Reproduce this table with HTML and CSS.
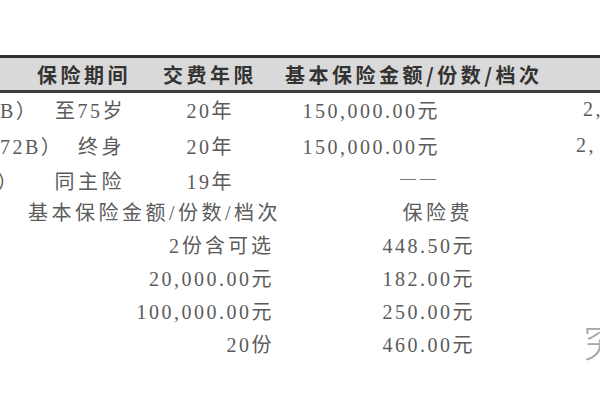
FILE: index.html
```html
<!DOCTYPE html>
<html lang="zh-CN">
<head>
<meta charset="utf-8">
<link rel="stylesheet" href="styles.css">
</head>
<body>
<div class="page">
  <div class="top">
    <div class="row head">
      <div class="c0"></div>
      <div class="c1">保险期间</div>
      <div class="c2">交费年限</div>
      <div class="c3">基本保险金额/份数/档次</div>
      <div class="c4"></div>
    </div>
    <div class="row r1">
      <div class="c0">B）</div>
      <div class="c1 val">至75岁</div>
      <div class="c2 val">20年</div>
      <div class="c3 val">150,000.00元</div>
      <div class="c4 p1">2,</div>
    </div>
    <div class="row r2">
      <div class="c0">72B）</div>
      <div class="c1 val wide">终身</div>
      <div class="c2 val">20年</div>
      <div class="c3 val">150,000.00元</div>
      <div class="c4 p2">2,</div>
    </div>
    <div class="row r3">
      <div class="c0 paren">）</div>
      <div class="c1 val wide">同主险</div>
      <div class="c2 val">19年</div>
      <div class="c3 val dash">——</div>
      <div class="c4"></div>
    </div>
  </div>
  <div class="sub">
    <div class="a subhead wide">基本保险金额/份数/档次</div>
    <div class="b subhead wide">保险费</div>
    <div class="a num wide3">2份含可选</div>
    <div class="b num">448.50元</div>
    <div class="a num">20,000.00元</div>
    <div class="b num">182.00元</div>
    <div class="a num">100,000.00元</div>
    <div class="b num">250.00元</div>
    <div class="mark">究</div>
    <div class="a num">20份</div>
    <div class="b num">460.00元</div>
  </div>
</div>
</body>
</html>
```

FILE: styles.css
```css
html, body {
  margin: 0;
  padding: 0;
  background: #ffffff;
}

body {
  width: 600px;
  height: 400px;
  overflow: hidden;
  font-family: "Liberation Serif", "Noto Sans CJK SC", serif;
  font-size: 20px;
  color: #5b5b5b;
  letter-spacing: 2.5px;
}

.page {
  width: 600px;
  padding-top: 55px;
}

.top {
  display: flex;
  flex-direction: column;
}

.row {
  display: grid;
  grid-template-columns: 30px 100px 130px 285px 55px;
  align-items: center;
  white-space: nowrap;
}

.head {
  height: 32px;
  background: #d9d9d9;
  border-top: 3px solid #2f2f2f;
  border-bottom: 3px solid #3c3c3c;
  color: #333333;
  font-family: "Noto Sans CJK SC", sans-serif;
  font-weight: 600;
  letter-spacing: 3.5px;
}

.head .c1 { padding-left: 7px; }
.head .c2 { padding-left: 33px; }
.head .c3 { padding-left: 25px; }

.r1 { height: 32px; }
.r2 { height: 40px; }
.r3 { height: 30px; }

.c0 {
  overflow: visible;
}

.paren {
  margin-left: -3px;
}

.val {
  text-align: right;
}

.c1.val { padding-right: 5px; }
.c2.val { padding-right: 26px; }
.c3.val { padding-right: 105px; }

.wide {
  letter-spacing: 3.5px;
}

.dash {
  color: #777777;
  letter-spacing: 4px;
  font-size: 16px;
  position: relative;
  top: -2px;
}

.p1 { padding-left: 38px; }
.p2 { padding-left: 31px; }

.sub {
  display: grid;
  grid-template-columns: 283px 192px 125px;
  grid-auto-rows: 33px;
  align-items: center;
  white-space: nowrap;
}

.a { grid-column: 1; }
.b { grid-column: 2; }

.subhead.a {
  padding-left: 28px;
}

.subhead.b {
  text-align: right;
  padding-right: 2px;
}

.num.a {
  text-align: right;
  padding-right: 9px;
}

.num.b {
  text-align: right;
  padding-right: 0;
}

.wide3 {
  letter-spacing: 3px;
}

.mark {
  grid-column: 3;
  grid-row: 4 / 6;
  align-self: end;
  padding-left: 108px;
  font-family: "Noto Sans CJK SC", sans-serif;
  font-size: 40px;
  line-height: 40px;
  color: #a8a8a8;
  font-weight: 300;
  letter-spacing: 0;
}
```
